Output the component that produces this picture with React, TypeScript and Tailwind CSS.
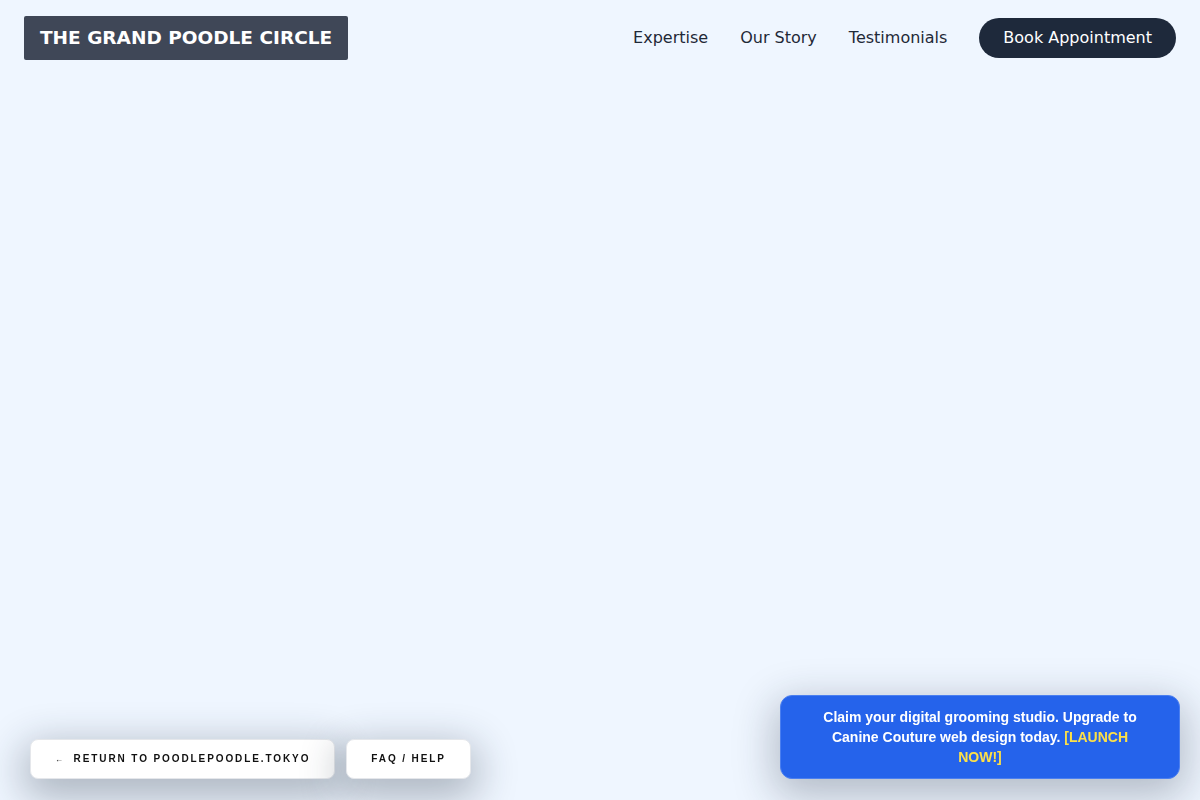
import React from "react";

export default function App() {
  return (
    <div className="min-h-screen w-full bg-[#eff6ff] relative" style={{ fontFamily: '"DejaVu Sans", sans-serif' }}>
      <header className="flex items-center justify-between px-6 py-4">
        <div className="bg-[#3f4757] px-4 py-2 rounded-[2px]">
          <span className="text-white text-[18.5px] leading-7 font-bold">THE GRAND POODLE CIRCLE</span>
        </div>
        <nav className="flex items-center gap-8 text-[16px] text-[#1f2937]">
          <a href="#">Expertise</a>
          <a href="#">Our Story</a>
          <a href="#">Testimonials</a>
          <a href="#" className="bg-[#1e293b] text-white rounded-full px-6 h-10 flex items-center">Book Appointment</a>
        </nav>
      </header>

      <div className="fixed left-[30px] bottom-[21px] flex gap-[11px]" style={{ fontFamily: '"Liberation Sans", Arial, sans-serif' }}>
        <a href="#" className="bg-white rounded-lg px-6 py-[11px] text-[10px] leading-[15px] font-bold tracking-[0.19em] text-[#111] shadow-[0_12px_40px_6px_rgba(30,41,59,0.33)] border border-[#e5e7eb]">
          <span className="text-[8px] mr-1">←</span> RETURN TO POODLEPOODLE.TOKYO
        </a>
        <a href="#" className="bg-white rounded-lg px-6 py-[11px] text-[10px] leading-[15px] font-bold tracking-[0.19em] text-[#111] shadow-[0_12px_40px_6px_rgba(30,41,59,0.33)] border border-[#e5e7eb]">
          FAQ / HELP
        </a>
      </div>

      <div className="fixed right-5 bottom-[21px] w-[400px] bg-[#2563eb] rounded-xl border border-[#4b7ff0] px-8 py-[11px] text-center text-white text-[14px] leading-5 font-bold shadow-[0_12px_40px_6px_rgba(30,41,59,0.28)]" style={{ fontFamily: '"Liberation Sans", Arial, sans-serif' }}>
        Claim your digital grooming studio. Upgrade to Canine Couture web design today.{" "}
        <span className="text-[#fde047]">[LAUNCH NOW!]</span>
      </div>
    </div>
  );
}
